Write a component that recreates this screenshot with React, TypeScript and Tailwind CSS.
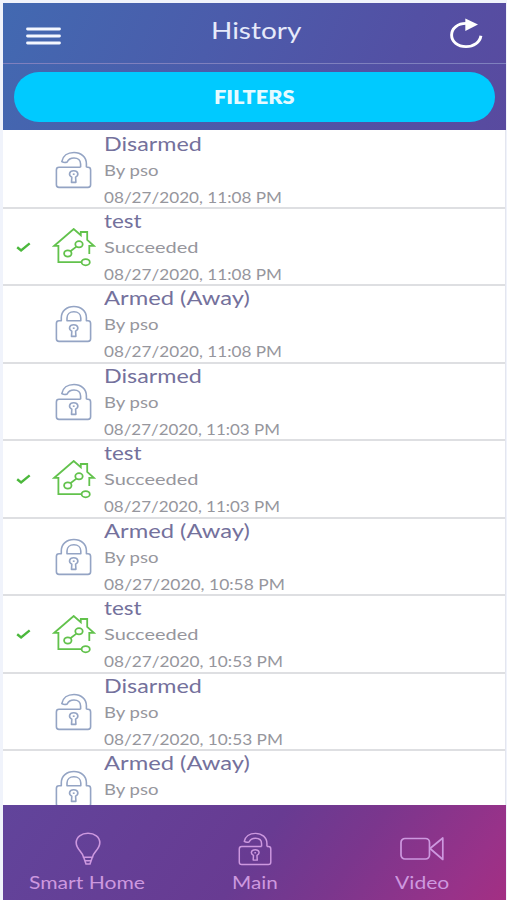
import { useLayoutEffect, useRef, useState } from "react";

type FitProps = { text: string; width: number; className: string };

// Stretches a line of text horizontally to a given width.
function Fit({ text, width, className }: FitProps) {
  const ref = useRef<HTMLSpanElement>(null);
  const [scale, setScale] = useState(1);
  useLayoutEffect(() => {
    if (ref.current) setScale(width / ref.current.offsetWidth);
  }, [text, width]);
  return (
    <div className={`flex whitespace-nowrap ${className}`} style={{ width }}>
      <span ref={ref} className="block shrink-0 origin-left" style={{ transform: `scaleX(${scale})` }}>
        {text}
      </span>
    </div>
  );
}

function Lock({ open = false, className }: { open?: boolean; className: string }) {
  return (
    <svg viewBox="0 0 38 38" preserveAspectRatio="none" fill="none" stroke="currentColor" strokeWidth="1.6" strokeLinejoin="round" className={className}>
      {open ? (
        <>
          <path d="M31.4 16.3V12.8C31.4 6 26 1.5 19 1.5C12.5 1.5 7.8 5 6.8 10.6Q9.4 12.2 12.2 11C13.4 8.2 15.5 7 19 7C23 7 25.6 9.4 25.6 13V16.3" />
          <path d="M25.6 16.3H4Q1.4 16.3 1.4 18.9V33.8Q1.4 36.4 4 36.4H33Q35.6 36.4 35.6 33.8V18.9Q35.6 16.3 33 16.3H31.4" />
        </>
      ) : (
        <>
          <path d="M6.3 15.8V12.8C6.3 6 11.7 1.5 18.9 1.5C26 1.5 31.4 6 31.4 12.8V15.8H33Q35.6 15.8 35.6 18.4V33.8Q35.6 36.4 33 36.4H4Q1.4 36.4 1.4 33.8V18.4Q1.4 15.8 4 15.8Z" />
          <path d="M12 15.8V13C12 9.2 14.8 6.8 18.9 6.8C23 6.8 25.8 9.2 25.8 13V15.8Z" />
        </>
      )}
      <path d="M16.8 26.2C13.2 24.2 14 19.8 18.7 19.8C23.4 19.8 24.2 24.2 20.6 26.2L20.9 31.4H16.5Z" />
      <path d="M17.8 23.2h1.8" />
    </svg>
  );
}

function House() {
  return (
    <svg viewBox="0 0 44 40" className="ml-px h-10 w-11 text-[#62c24c]" fill="none" stroke="currentColor" strokeWidth="1.8">
      <path d="M29.5 34.2H6.4V17.8H2.3L21.7 1L28.8 7.2V4H35.2V11.8L41.8 17.8H37.3V26" />
      <ellipse cx="33.7" cy="34.2" rx="4.1" ry="3.1" />
      <ellipse cx="15.8" cy="25.5" rx="3.7" ry="3.1" />
      <ellipse cx="27" cy="16.3" rx="3.7" ry="3.1" />
      <path d="M18.4 23.2L24.4 18.6" />
    </svg>
  );
}

type Entry = { kind: "open" | "closed" | "scene"; time?: string; timeWidth?: number };

const entries: Entry[] = [
  { kind: "open", time: "11:08", timeWidth: 178 },
  { kind: "scene", time: "11:08", timeWidth: 178 },
  { kind: "closed", time: "11:08", timeWidth: 178 },
  { kind: "open", time: "11:03", timeWidth: 176 },
  { kind: "scene", time: "11:03", timeWidth: 176 },
  { kind: "closed", time: "10:58", timeWidth: 181 },
  { kind: "scene", time: "10:53", timeWidth: 179 },
  { kind: "open", time: "10:53", timeWidth: 179 },
  { kind: "closed" },
];

const labels = {
  open: { title: "Disarmed", titleWidth: 98, sub: "By pso", subWidth: 55 },
  closed: { title: "Armed (Away)", titleWidth: 146, sub: "By pso", subWidth: 55 },
  scene: { title: "test", titleWidth: 38, sub: "Succeeded", subWidth: 94 },
};

function Row({ entry }: { entry: Entry }) {
  const label = labels[entry.kind];
  return (
    <li className="flex h-[77.45px] shrink-0 border-b-2 border-[#dedfe2]">
      <div className="flex w-12 shrink-0 pt-[33px] pl-[13px]">
        {entry.kind === "scene" && (
          <svg viewBox="0 0 15 11" className="h-[11px] w-[15px]" fill="none" stroke="#4bb83c" strokeWidth="2.4">
            <path d="M1.2 5.2L5.1 8.4L13.7 1.4" />
          </svg>
        )}
      </div>
      <div className="w-[52px] shrink-0 pt-[19px]">
        {entry.kind === "scene" ? (
          <House />
        ) : (
          <Lock open={entry.kind === "open"} className="ml-1 h-[38px] w-[38px] text-[#94a4c4]" />
        )}
      </div>
      <div className="-mt-px pl-px">
        <Fit text={label.title} width={label.titleWidth} className="h-[26px] text-[19.5px] leading-[26px] text-[#74719c]" />
        <Fit text={label.sub} width={label.subWidth} className="h-[26px] text-[15.5px] leading-[27px] text-[#96969d]" />
        {entry.time && (
          <Fit text={`08/27/2020, ${entry.time} PM`} width={entry.timeWidth ?? 179} className="h-6 text-[15.5px] leading-[28px] text-[#96969d]" />
        )}
      </div>
    </li>
  );
}

export default function App() {
  return (
    <div className="flex h-[900px] w-[507px] flex-col overflow-hidden bg-[#f0f3fb] pt-[3px] pr-px pl-[3px] font-['Lato','Open_Sans',sans-serif]">
      <header className="h-[127px] shrink-0 bg-[linear-gradient(115deg,#4269b1_0%,#4b5cab_40%,#5350a4_75%,#594a9f_100%)]">
        <div className="flex h-[61px] justify-between border-b border-[#7f80be] pr-[23px] pl-[23px]">
          <svg viewBox="0 0 35 18" className="mt-[23.5px] h-[18px] w-[35px]" stroke="#f4f7ff" strokeWidth="2.8" strokeLinecap="round">
            <path d="M1.5 2H33.5M1.5 9H33.5M1.5 16H33.5" />
          </svg>
          <h1 className="pt-[11px] pl-0.5">
            <Fit text="History" width={90} className="text-[23px] leading-8 text-[#e6eafa]" />
          </h1>
          <svg viewBox="0 0 34 32" className="mt-[14px] h-8 w-[34px]" fill="none">
            <path d="M17.5 6.4C9 6.2 2.6 11.2 2.6 18C2.6 24.8 8.8 29.6 17 29.6C24.8 29.6 31 25.2 31.9 18.8" stroke="#fff" strokeWidth="2.9" />
            <path d="M16.3 1.5L29 7.6L16.3 14Z" fill="#fff" />
          </svg>
        </div>
        <div className="px-[11px] pt-2">
          <button className="flex h-[49.5px] w-full items-center justify-center rounded-full bg-[#00caff]">
            <Fit text="FILTERS" width={81} className="text-[19px] leading-6 font-extrabold text-[#e6faff]" />
          </button>
        </div>
      </header>

      <main className="min-h-0 flex-1 overflow-hidden border-r border-[#e4e6ef] bg-white pt-[1.5px]">
        <ul className="flex flex-col">
          {entries.map((entry, i) => (
            <Row key={i} entry={entry} />
          ))}
        </ul>
      </main>

      <nav className="flex h-[95px] shrink-0 bg-[linear-gradient(125deg,#61449b_0%,#683b92_50%,#7b368d_68%,#983289_90%,#a32f83_100%)] text-[#cd98df]">
        <div className="flex w-[168px] flex-col items-center">
          <svg viewBox="0 0 26 34" className="mt-[27px] ml-px h-[34px] w-[26px]" fill="none" stroke="currentColor" strokeWidth="1.6">
            <path d="M8.5 25.2C8 20.2 1.2 17.5 1.2 10.8C1.2 5 6.5 1.2 13 1.2C19.5 1.2 24.8 5 24.8 10.8C24.8 17.5 18 20.2 17.5 25.2Z" />
            <path d="M8.7 25.2L11 32H15L17.3 25.2M10 28.8H16" />
          </svg>
          <Fit text="Smart Home" width={116} className="mt-0.5 text-[18px] leading-7" />
        </div>
        <div className="flex w-[168px] flex-col items-center">
          <Lock open className="mt-[27px] h-[34px] w-[35px]" />
          <Fit text="Main" width={46} className="mt-0.5 text-[18px] leading-7" />
        </div>
        <div className="flex w-[167px] flex-col items-center">
          <svg viewBox="0 0 44 34" className="mt-[27px] -ml-0.5 h-[34px] w-11" fill="none" stroke="currentColor" strokeWidth="1.7" strokeLinejoin="round">
            <rect x="1" y="6.5" width="28.5" height="20.5" rx="4" />
            <path d="M30 16.5L42.8 6V27.5Z" />
          </svg>
          <Fit text="Video" width={54} className="mt-0.5 -ml-0.5 text-[18px] leading-7" />
        </div>
      </nav>
    </div>
  );
}
